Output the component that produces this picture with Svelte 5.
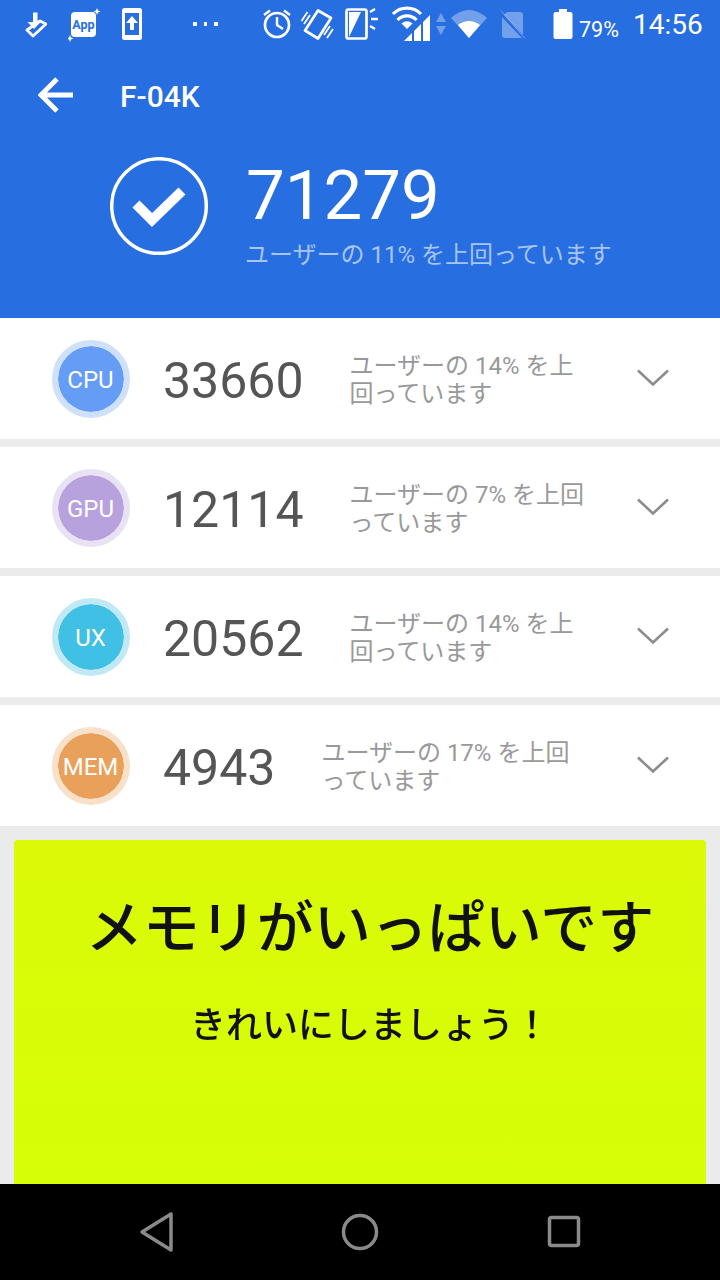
<script>
    // benchmark sub scores shown in the list
    const rows = [
        { label: "CPU", score: "33660", pct: 14, cls: "cpu" },
        { label: "GPU", score: "12114", pct: 7, cls: "gpu" },
        { label: "UX", score: "20562", pct: 14, cls: "ux" },
        { label: "MEM", score: "4943", pct: 17, cls: "mem" },
    ];
</script>

<div class="page">
    <header>
        <div class="status">
            <svg class="ml25" width="22" height="48" viewBox="25 0 22 48">
                <path d="M33 12.500h4.500v8.500h4l-7.500 8-6.500-7h5.500z" fill="#fff" />
                <path d="M27 30l13-9 6 3-13 12z" fill="none" stroke="#fff" stroke-width="2.800" stroke-linejoin="round" />
            </svg>
            <svg class="ml21" width="34" height="48" viewBox="68 0 34 48">
                <rect x="71" y="12" width="25" height="25" rx="4" fill="#fff" />
                <text x="83.500" y="29" class="app">App</text>
                <path d="M97 8l1 2.500 2.500 1-2.500 1-1 2.500-1-2.500-2.500-1 2.500-1z" fill="#fff" />
                <path d="M70 35l1 2.500 2.500 1-2.500 1-1 2.500-1-2.500-2.500-1 2.500-1z" fill="#fff" />
            </svg>
            <svg class="ml20" width="20" height="48" viewBox="122 0 20 48">
                <rect x="122" y="8" width="20" height="32" rx="2.500" fill="#fff" />
                <rect x="125" y="13" width="14" height="22" fill="#276ee0" />
                <path d="M132 16l6 7h-4v7h-4v-7h-4z" fill="#fff" />
            </svg>
            <div class="dots"><i></i><i></i><i></i></div>
            <svg class="ml44" width="30" height="48" viewBox="262 0 30 48">
                <circle cx="277" cy="25" r="12" fill="none" stroke="#fff" stroke-width="2.700" />
                <path d="M277 17v8l6 4M264 15l6-4.500M290 15l-6-4.500" fill="none" stroke="#fff" stroke-width="2.400" />
            </svg>
            <svg class="ml8" width="34" height="48" viewBox="300 0 34 48">
                <path d="M318 10.500l13 7.500-13 20.500-13-8z" fill="none" stroke="#fff" stroke-width="2.700" stroke-linejoin="round" />
                <path d="M301.500 21l6-9M304 24l6-9M333 29l-6 9M330 26l-6 9" fill="none" stroke="#fff" stroke-width="1.800" />
            </svg>
            <svg class="ml11" width="34" height="48" viewBox="345 0 34 48">
                <rect x="346.500" y="9.500" width="20" height="29" rx="2" fill="none" stroke="#fff" stroke-width="2.700" />
                <path d="M349 12h12l-12 25z" fill="#fff" />
                <path d="M370 12l5-3M371 19h7M370 26l5 3" fill="none" stroke="#fff" stroke-width="2.400" />
            </svg>
            <svg class="ml12" width="40" height="48" viewBox="391 0 40 48">
                <path d="M393 14a19.500 19.500 0 0 1 28 0M397.500 20a13 13 0 0 1 19 0" fill="none" stroke="#fff" stroke-width="3.200" />
                <path d="M407 29l-5.500-5.500a8 8 0 0 1 11 0z" fill="#fff" />
                <path d="M404 41h8v-8zM414 41h7V24l-7 7zM423 41h7V15l-7 7z" fill="#fff" />
            </svg>
            <svg class="ml4" width="12" height="48" viewBox="435 0 12 48">
                <path d="M441 13l5 9h-10zM436 26h10l-5 9z" fill="#fff" opacity="0.35" />
            </svg>
            <svg class="ml3" width="37" height="48" viewBox="450 0 37 48">
                <path d="M469 38L451 18q18-16 36 0z" fill="#fff" opacity="0.35" />
                <path d="M469 38l-11-13q11-8 22 0z" fill="#fff" />
            </svg>
            <svg class="ml11" width="28" height="48" viewBox="498 0 28 48">
                <path d="M507 12h13a3 3 0 0 1 3 3v23h-18a3 3 0 0 1-3-3V17z" fill="#fff" opacity="0.35" />
                <path d="M499 12l26 27" stroke="#276ee0" stroke-width="3" />
                <path d="M501 10.500l24 28" stroke="#fff" stroke-width="1" opacity="0.35" />
            </svg>
            <svg class="ml27" width="20" height="48" viewBox="553 0 20 48">
                <path d="M559 9h8v3h3.500a2 2 0 0 1 2 2v23a2 2 0 0 1-2 2h-15a2 2 0 0 1-2-2V14a2 2 0 0 1 2-2h3.500z" fill="#fff" />
            </svg>
            <span class="batt">79%</span>
            <span class="clock">14:56</span>
        </div>

        <div class="appbar">
            <svg width="36" height="38" viewBox="38 78 36 38">
                <path d="M73 96H43M57 80L41 96l16 16" fill="none" stroke="#fff" stroke-width="4.800" />
            </svg>
            <span class="model">F-04K</span>
        </div>

        <div class="total">
            <svg width="100" height="100" viewBox="0 0 100 100">
                <circle cx="49" cy="49" r="47.300" fill="none" stroke="#fff" stroke-width="3.500" />
                <path d="M26 47l16 16 30-29" fill="none" stroke="#fff" stroke-width="10" />
            </svg>
            <div class="total-text">
                <div class="total-score">71279</div>
                <div class="total-pct">ユーザーの 11% を上回っています</div>
            </div>
        </div>
    </header>

    <main>
        {#each rows as row}
            <section class="row">
                <div class="badge {row.cls}"><span>{row.label}</span></div>
                <div class="score">{row.score}</div>
                <div class="pct">ユーザーの {row.pct}% を上回っています</div>
                <svg class="chev" width="32" height="18" viewBox="0 0 32 18">
                    <path d="M1 1.500l15 14 15-14" fill="none" stroke="#8c8c8c" stroke-width="2.600" />
                </svg>
            </section>
        {/each}

        <div class="ad">
            <div class="ad-title">メモリがいっぱいです</div>
            <div class="ad-sub">きれいにしましょう！</div>
        </div>
    </main>

    <nav>
        <svg width="36" height="42" viewBox="0 0 36 42">
            <path d="M32 3v36L3 21z" fill="none" stroke="#8a8a8a" stroke-width="3.500" stroke-linejoin="round" />
        </svg>
        <svg width="38" height="38" viewBox="0 0 38 38">
            <circle cx="19" cy="19" r="16.500" fill="none" stroke="#8a8a8a" stroke-width="3.500" />
        </svg>
        <svg width="36" height="34" viewBox="0 0 36 34">
            <rect x="4.500" y="2.500" width="29" height="28" rx="2" fill="none" stroke="#8a8a8a" stroke-width="3.500" />
        </svg>
    </nav>
</div>

<style>
    :global(body) {
        margin: 0;
        background: #ebebeb;
    }

    .page {
        width: 720px;
        height: 1280px;
        display: flex;
        flex-direction: column;
        overflow: hidden;
        font-family: Roboto, "Noto Sans CJK JP", sans-serif;
    }

    header {
        height: 318px;
        flex: none;
        background: #276ee0;
        color: #fff;
    }

    .status {
        height: 48px;
        display: flex;
        align-items: flex-start;
    }

    .status svg {
        flex: none;
    }

    .ml3 { margin-left: 3px; }
    .ml4 { margin-left: 4px; }
    .ml8 { margin-left: 8px; }
    .ml11 { margin-left: 11px; }
    .ml12 { margin-left: 12px; }
    .ml20 { margin-left: 20px; }
    .ml21 { margin-left: 21px; }
    .ml25 { margin-left: 25px; }
    .ml27 { margin-left: 27px; }
    .ml44 { margin-left: 44.500px; }

    .app {
        font: 700 12.500px Roboto, sans-serif;
        fill: #276ee0;
        text-anchor: middle;
    }

    .dots {
        display: flex;
        gap: 7px;
        margin: 22px 0 0 51px;
    }

    .dots i {
        width: 3.500px;
        height: 3.500px;
        background: #fff;
    }

    .batt {
        margin: 17px 0 0 6px;
        font-size: 21.500px;
        line-height: 26px;
    }

    .clock {
        margin: 7px 0 0 14px;
        font-size: 28px;
        line-height: 36px;
    }

    .appbar {
        height: 96px;
        display: flex;
        align-items: center;
        padding-left: 38px;
    }

    .model {
        margin-left: 46px;
        font-size: 30px;
        font-weight: 500;
    }

    .total {
        display: flex;
        padding: 13px 0 0 110px;
    }

    .total-text {
        margin-left: 36px;
    }

    .total-score {
        margin-top: -4px;
        font-size: 69px;
        line-height: 86px;
    }

    .total-pct {
        margin-left: -1px;
        font-size: 24px;
        line-height: 32px;
        color: rgba(255, 255, 255, 0.6);
    }

    main {
        flex: 1;
        min-height: 0;
        display: flex;
        flex-direction: column;
        gap: 8px;
    }

    .row {
        height: 121px;
        flex: none;
        background: #fff;
        display: flex;
        align-items: center;
        padding: 0 130px 0 52px;
        box-sizing: border-box;
        position: relative;
    }

    .badge {
        width: 78px;
        height: 78px;
        flex: none;
        box-sizing: border-box;
        border-radius: 50%;
        border: 6px solid;
        display: flex;
        align-items: center;
        justify-content: center;
        color: #fff;
        font-size: 24px;
        background-clip: padding-box;
    }

    .badge span {
        padding: 2px 1px 0 0;
    }

    .cpu { background-color: #659cf5; border-color: #cfe0fb; }
    .gpu { background-color: #b7a2dd; border-color: #e9e2f5; }
    .ux { background-color: #3fc0e4; border-color: #c1e9f5; }
    .mem { background-color: #e9a05a; border-color: #f9e0c9; }

    .score {
        margin-left: 33px;
        font-size: 50px;
        color: #555;
        padding-top: 4px;
    }

    .pct {
        margin-left: 46px;
        flex: 1;
        min-width: 0;
        font-size: 24px;
        line-height: 28px;
        color: #999;
        line-break: anywhere;
        padding-top: 2px;
    }

    .chev {
        position: absolute;
        left: 637px;
        top: 51px;
    }

    .ad {
        flex: 1;
        margin: 6px 14px 0;
        background: linear-gradient(#dbfa08, #d6fe06);
        border-radius: 4px 4px 0 0;
        color: #111;
        padding: 48px 0 0 20px;
        text-align: center;
    }

    .ad-title {
        font-size: 57px;
        line-height: 70px;
        font-weight: 500;
        font-family: "Noto Sans CJK JP", sans-serif;
        filter: blur(0.4px);
    }

    .ad-sub {
        margin-top: 39px;
        font-size: 36px;
        line-height: 50px;
        font-weight: 500;
        font-family: "Noto Sans CJK JP", sans-serif;
        filter: blur(0.4px);
    }

    nav {
        height: 96px;
        flex: none;
        background: #000;
        display: flex;
        align-items: center;
        justify-content: space-between;
        padding: 0 139px;
    }
</style>
